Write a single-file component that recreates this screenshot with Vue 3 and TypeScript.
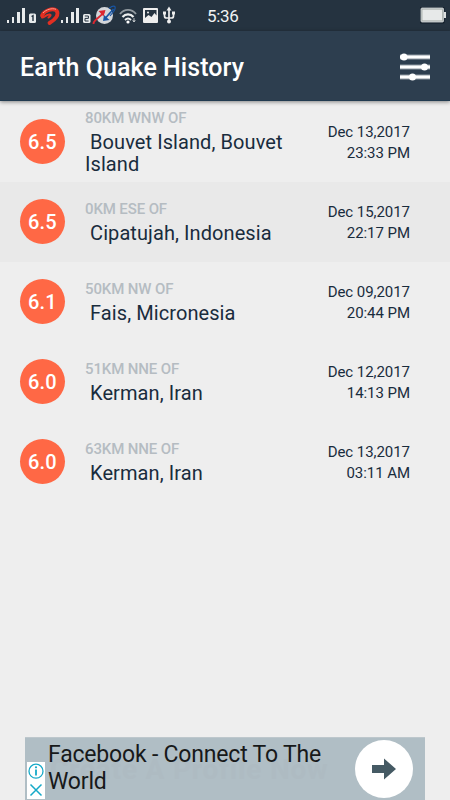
<script setup lang="ts">
interface Quake {
  magnitude: string
  offset: string
  place: string
  date: string
  time: string
}

const quakes: Quake[] = [
  { magnitude: '6.5', offset: '80KM WNW OF', place: ' Bouvet Island, Bouvet Island', date: 'Dec 13,2017', time: '23:33 PM' },
  { magnitude: '6.5', offset: '0KM ESE OF', place: ' Cipatujah, Indonesia', date: 'Dec 15,2017', time: '22:17 PM' },
  { magnitude: '6.1', offset: '50KM NW OF', place: ' Fais, Micronesia', date: 'Dec 09,2017', time: '20:44 PM' },
  { magnitude: '6.0', offset: '51KM NNE OF', place: ' Kerman, Iran', date: 'Dec 12,2017', time: '14:13 PM' },
  { magnitude: '6.0', offset: '63KM NNE OF', place: ' Kerman, Iran', date: 'Dec 13,2017', time: '03:11 AM' },
]
</script>

<template>
  <div class="screen">
    <div class="status">
      <svg class="status-icons" width="180" height="31" viewBox="0 0 180 31">
        <g fill="#e8ebec">
          <path d="M7 20h2v3H7zM12 17h2v6h-2zM17 12h3v11h-3zM22 8h3v15h-3z" />
          <path d="M61 20h2v3h-2zM66 17h2v6h-2zM71 12h3v11h-3zM76 8h3v15h-3z" />
          <rect x="29" y="13.500" width="7" height="9.500" rx="1.500" />
          <rect x="83" y="14" width="7.500" height="9" rx="1.500" />
        </g>
        <path d="M31.500 16.500l1.500-.8v5.300" stroke="#253340" fill="none" stroke-width="1.400" />
        <path d="M84.800 16h3.600v2.400h-3.400V21h3.600" stroke="#253340" fill="none" stroke-width="1" />
        <path d="M42 15.500C44.500 10.500 52.500 7.500 56.500 10.500C59.500 14.500 55.500 19.500 49.500 23" stroke="#e22f22" stroke-width="3.800" fill="none" stroke-linecap="round" />
        <path d="M42 17.500C43 18.500 46 14.500 49.500 14.500C51.500 14.500 50.500 16.500 48.500 17.500" stroke="#e22f22" stroke-width="2" fill="none" stroke-linecap="round" />
        <path d="M43 13C46 9.500 52 7.800 56 9.300" stroke="#ff9c8d" stroke-width="1" fill="none" />
        <circle cx="104.500" cy="15.500" r="8.500" fill="#d3d6da" />
        <path d="M93.500 24C93 20 98 19.500 104 12" stroke="#dc2630" stroke-width="1.900" fill="none" />
        <path d="M98.500 11l7-1-2 6.500z" fill="#dc2630" />
        <path d="M105.500 18L113.500 9" stroke="#1855a4" stroke-width="1.800" fill="none" />
        <path d="M104 15l5.500 5-6.500 1z" fill="#1855a4" />
        <path d="M109 8.500C114 4.500 117 6 114 11L110 16" stroke="#1855a4" stroke-width="1.200" fill="none" />
        <g fill="none" stroke="#edf0f0">
          <path d="M120 14C124.500 8.500 131.500 8.500 136 14" stroke-width="1.900" opacity=".55" />
          <path d="M122.500 17C125.500 13.500 130.500 13.500 133.500 17" stroke-width="2.200" />
          <path d="M125 20C127 18 129 18 131 20" stroke-width="1.900" />
          <path d="M134 18v4m-1.300-2l1.300 2 1.300-2" stroke-width="1" opacity=".7" />
        </g>
        <circle cx="128" cy="22" r="1.600" fill="#fff" />
        <path fill="#eee" fill-rule="evenodd" d="M144 8h13q1 0 1 1v13q0 1-1 1h-13q-1 0-1-1V9q0-1 1-1zm1 2v8l3.500-3 3 2 3-4 2 2.500v-5.500z" />
        <circle cx="148" cy="12.500" r="1" fill="#eee" />
        <path d="M169 9v12M164.500 13v3q0 2 2 2h5q2 0 2-2v-3" fill="none" stroke="#eee" stroke-width="1.700" />
        <path d="M169 6.500l2.500 4h-5zM163 11.500h3v3h-3zM172 11.500h3v3h-3z" fill="#eee" />
        <circle cx="169" cy="21.500" r="2" fill="#eee" />
      </svg>
      <span class="clock">5:36</span>
      <svg class="battery" width="27" height="18" viewBox="0 0 27 18">
        <rect x="0" y="1" width="24.500" height="16.500" rx="1" fill="#111d28" />
        <path d="M24 6h2v6h-2z" fill="#dce0e1" />
        <rect x="1" y="2" width="22.500" height="14" rx="1" fill="#e7e9e9" stroke="#b7bdc0" />
        <path d="M2 3.200h20.500v11.600H2z" fill="none" stroke="#89938f" stroke-width=".6" />
      </svg>
    </div>

    <header class="toolbar">
      <h1>Earth Quake History</h1>
      <svg width="32" height="28" viewBox="0 0 32 28" fill="#fff">
        <path d="M1 1.500h30v5H1zM1 11.500h30v5H1zM1 21.500h30v5H1z" fill="#8c96a0" />
        <path d="M1 2.500h30v3H1zM1 12.500h30v3H1zM1 22.500h30v3H1z" />
        <circle cx="5" cy="4" r="3.500" />
        <circle cx="25.500" cy="14" r="3.500" />
        <circle cx="13.500" cy="24" r="3.500" />
      </svg>
    </header>

    <main class="list">
      <article v-for="(quake, i) in quakes" :key="i" class="row" :class="{ pressed: i === 1 }">
        <div class="magnitude">{{ quake.magnitude }}</div>
        <div class="location">
          <div class="offset">{{ quake.offset }}</div>
          <div class="place">{{ quake.place }}</div>
        </div>
        <div class="when">
          <div>{{ quake.date }}</div>
          <div>{{ quake.time }}</div>
        </div>
      </article>
    </main>

    <aside class="ad">
      <div class="ghost">Create A Profile Now</div>
      <div class="ad-title">Facebook - Connect To The World</div>
      <div class="go">
        <svg width="26" height="22" viewBox="0 0 26 22">
          <path d="M1 7h12V.500L25 11 13 21.500V15H1z" fill="#455a64" />
        </svg>
      </div>
      <svg class="choices" width="18" height="37" viewBox="0 0 18 37">
        <path d="M0 0h18v37H0z" fill="#fff" />
        <g fill="none" stroke="#15a9c8">
          <circle cx="9" cy="9.200" r="7" stroke-width="1.300" />
          <path d="M9 7.500v6" stroke-width="1.800" />
          <path d="M3.500 22.500l11 11M14.500 22.500l-11 11" stroke-width="1.500" />
        </g>
        <circle cx="9" cy="5.300" r="1.100" fill="#15a9c8" />
      </svg>
    </aside>
  </div>
</template>

<style>
body {
  margin: 0;
  background: #eee;
}
</style>

<style scoped>
.screen {
  width: 450px;
  height: 800px;
  display: flex;
  flex-direction: column;
  overflow: hidden;
  background: #eee;
  font-family: Roboto, "Liberation Sans", sans-serif;
  color: #192c3d;
}
.status {
  height: 31px;
  flex: none;
  display: flex;
  background: #253340;
}
.status-icons {
  flex: none;
}
.clock {
  width: 60px;
  margin-left: 27px;
  font-size: 17px;
  line-height: 33px;
  letter-spacing: -0.3px;
  color: #f1f3f4;
}
.battery {
  margin: 6px 3px 0 auto;
}
.toolbar {
  height: 70px;
  flex: none;
  box-sizing: border-box;
  padding: 2px 19px 0 20px;
  display: flex;
  align-items: center;
  justify-content: space-between;
  background: #2d3e4f;
  border-bottom: 1px solid #223b50;
  box-shadow: 0 1px 4px rgba(0, 0, 0, 0.45);
  z-index: 1;
}
h1 {
  margin: 2px 0 0;
  font-size: 25px;
  line-height: 30px;
  font-weight: 500;
  letter-spacing: 0.05px;
  color: #fff;
}
.list {
  flex: 1;
  padding-top: 1px;
}
.row {
  height: 80px;
  box-sizing: border-box;
  padding: 0 40px 0 20px;
  display: flex;
  align-items: center;
}
.pressed {
  background: #e9e9e9;
}
.magnitude {
  width: 45px;
  height: 45px;
  flex: none;
  margin-top: -1px;
  border-radius: 50%;
  background: #ff6845;
  color: #fff;
  font-size: 20px;
  font-weight: 500;
  line-height: 46px;
  letter-spacing: 0.2px;
  text-align: center;
}
.location {
  width: 215px;
  margin: -1px 0 0 20px;
}
.offset {
  font-size: 15px;
  font-weight: 500;
  line-height: 20px;
  letter-spacing: -0.12px;
  color: #b5bcc2;
}
.place {
  font-size: 20px;
  line-height: 22px;
  letter-spacing: 0.08px;
  white-space: pre-wrap;
  margin-top: 3px;
}
.when {
  margin: 2px 0 0 auto;
  font-size: 15px;
  line-height: 21px;
  letter-spacing: -0.05px;
  text-align: right;
  white-space: nowrap;
}
.ad {
  position: relative;
  width: 400px;
  height: 63px;
  flex: none;
  margin: 0 auto;
  box-sizing: border-box;
  padding: 4px 12px 0 23px;
  display: flex;
  background: #b0bec5;
  box-shadow: inset 0 1px #bdc7cc;
}
.ad-title {
  position: relative;
  width: 290px;
  font-size: 23px;
  line-height: 27px;
  letter-spacing: -0.19px;
  color: #17191a;
}
.ghost {
  position: absolute;
  left: 25px;
  top: 17px;
  font-size: 28px;
  line-height: 32px;
  font-weight: 700;
  letter-spacing: 0.8px;
  white-space: nowrap;
  color: #aebbc2;
}
.go {
  width: 58px;
  height: 58px;
  margin: -1px 0 0 auto;
  border-radius: 50%;
  background: #fff;
  display: flex;
  align-items: center;
  justify-content: center;
}
.choices {
  position: absolute;
  left: 2px;
  bottom: 1px;
}
</style>
